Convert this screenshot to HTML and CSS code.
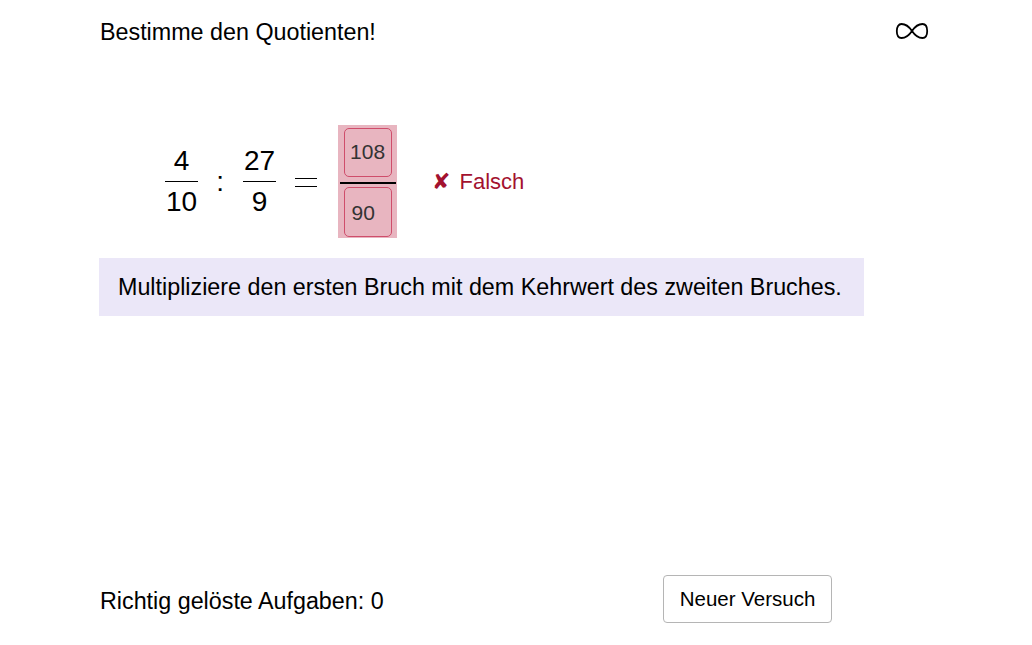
FILE: index.html
```html
<!DOCTYPE html>
<html lang="de">
<head>
<meta charset="utf-8">
<title>Quotient</title>
<link rel="stylesheet" href="styles.css">
</head>
<body>
<div class="page">
  <header class="top">
    <div class="task">Bestimme den Quotienten!</div>
    <svg class="inf" width="34" height="18" viewBox="0 0 34 18" aria-label="unendlich">
      <path d="M17 9 C13 3 9 2 6.5 2 C3.5 2 1.8 5 1.8 9 C1.8 13 3.5 16 6.5 16 C9 16 13 15 17 9 C21 3 25 2 27.5 2 C30.5 2 32.2 5 32.2 9 C32.2 13 30.5 16 27.5 16 C25 16 21 15 17 9 Z" fill="none" stroke="#000" stroke-width="1.8"/>
    </svg>
  </header>

  <section class="eq">
    <div class="frac"><span class="num">4</span><span class="bar"></span><span class="den">10</span></div>
    <span class="op colon">:</span>
    <div class="frac"><span class="num">27</span><span class="bar"></span><span class="den">9</span></div>
    <span class="eqsign" aria-label="="></span>
    <div class="answer">
      <div class="field">108</div>
      <span class="abar"></span>
      <div class="field low">90</div>
    </div>
    <div class="wrong"><span class="cross">✘</span>Falsch</div>
  </section>

  <div class="hint">Multipliziere den ersten Bruch mit dem Kehrwert des zweiten Bruches.</div>

  <footer class="bottom">
    <div class="score">Richtig gelöste Aufgaben: 0</div>
    <button class="retry">Neuer Versuch</button>
  </footer>
</div>
</body>
</html>
```
FILE: styles.css
```css
html, body {
  margin: 0;
  padding: 0;
  background: #fff;
}
body {
  font-family: "Liberation Sans", Arial, sans-serif;
  color: #000;
  width: 1032px;
  height: 645px;
}
.page {
  width: 830px;
  height: 645px;
  margin-left: 100px;
  display: flex;
  flex-direction: column;
}
.top {
  display: flex;
  justify-content: space-between;
  align-items: center;
  height: 26px;
  margin-top: 19px;
}
.task {
  font-size: 23.3px;
  line-height: 26px;
}
.inf {
  display: block;
  margin-top: -2px;
  margin-right: 1px;
}
.eq {
  display: flex;
  align-items: center;
  margin-top: 80px;
  margin-left: 65px;
  height: 113px;
}
.frac {
  display: flex;
  flex-direction: column;
  align-items: center;
  font-size: 28px;
  line-height: 30px;
}
.frac .bar {
  display: block;
  height: 1.5px;
  background: #000;
  width: 100%;
  min-width: 33px;
  margin: 5px 0 5px;
}
.frac .num, .frac .den {
  padding: 0 1px;
}
.op {
  font-size: 28px;
  line-height: 30px;
}
.colon {
  margin: 0 19px 0 18px;
}
.eqsign {
  display: block;
  width: 22px;
  height: 9px;
  box-sizing: border-box;
  border-top: 1.6px solid #000;
  border-bottom: 1.6px solid #000;
  margin: 1px 21px 0 19px;
}
.answer {
  background: #e8b5c0;
  width: 59px;
  height: 113px;
  display: flex;
  flex-direction: column;
  align-items: center;
  box-sizing: border-box;
  padding-top: 3px;
}
.field {
  width: 48px;
  height: 49px;
  box-sizing: border-box;
  border: 1.5px solid #cf4d6b;
  border-radius: 5px;
  color: #333;
  font-size: 21px;
  display: flex;
  align-items: center;
  justify-content: center;
  padding-bottom: 2px;
}
.field.low {
  height: 50px;
  justify-content: flex-start;
  padding-left: 7px;
  padding-top: 3px;
  padding-bottom: 0;
}
.abar {
  display: block;
  width: 56px;
  height: 1.5px;
  background: #000;
  margin: 5px 0 3px;
}
.wrong {
  color: #a3122f;
  font-size: 22px;
  margin-left: 35px;
  display: flex;
  align-items: center;
}
.cross {
  font-family: "DejaVu Sans", sans-serif;
  font-size: 22px;
  font-weight: bold;
  margin-right: 9px;
}
.hint {
  margin-top: 20px;
  width: 765px;
  height: 58px;
  margin-left: -1px;
  background: #ebe7f8;
  font-size: 23.3px;
  display: flex;
  align-items: center;
  padding-left: 19px;
  box-sizing: border-box;
}
.bottom {
  margin-top: auto;
  margin-bottom: 22px;
  display: flex;
  align-items: center;
  width: 732px;
  justify-content: space-between;
}
.score {
  font-size: 23.3px;
  padding-top: 5px;
}
.retry {
  font-family: "Liberation Sans", Arial, sans-serif;
  font-size: 20.5px;
  background: #fff;
  border: 1px solid #b5b5b5;
  border-radius: 4px;
  width: 169px;
  height: 48px;
  color: #000;
  padding: 0;
}
```
